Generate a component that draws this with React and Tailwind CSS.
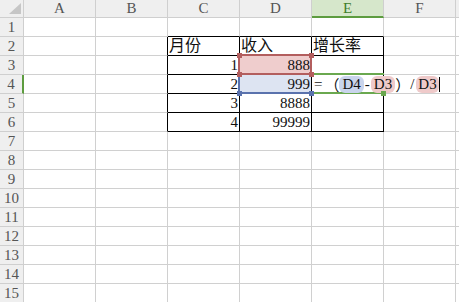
import React from 'react';

const cols = ['A', 'B', 'C', 'D', 'E', 'F', 'G'];
const rows = Array.from({ length: 15 }, (_, i) => i + 1);

const font = { fontFamily: '"Liberation Serif", "Noto Sans CJK SC", serif' };
const cjk = { fontFamily: '"Noto Sans CJK SC", sans-serif' };

// table C2:E6
const data = {
  'C2': { text: '月份', cjk: true },
  'D2': { text: '收入', cjk: true },
  'E2': { text: '增长率', cjk: true },
  'C3': { text: '1', right: true },
  'D3': { text: '888', right: true },
  'C4': { text: '2', right: true },
  'D4': { text: '999', right: true },
  'C5': { text: '3', right: true },
  'D5': { text: '8888', right: true },
  'C6': { text: '4', right: true },
  'D6': { text: '99999', right: true },
};

const Handle = ({ pos, color }) => (
  <div className={`absolute w-[5px] h-[5px] z-20 ${color} ${pos}`} />
);

const Cell = ({ r, c }) => {
  const key = cols[c] + r;
  const d = data[key];
  const rightBlack = r >= 2 && r <= 6 && c >= 1 && c <= 4;
  const bottomBlack = r >= 1 && r <= 6 && c >= 2 && c <= 4;
  let bg = 'bg-white';
  if (key === 'D3') bg = 'bg-[#efcdcd]';
  if (key === 'D4') bg = 'bg-[#dde4f2]';

  return (
    <div
      className={`relative border-r border-b ${rightBlack ? 'border-r-black' : 'border-r-[#d0d0d0]'} ${bottomBlack ? 'border-b-black' : 'border-b-[#d0d0d0]'} ${bg} flex items-center ${d && d.right ? 'justify-end pr-[1px]' : 'justify-start pl-[1px]'} overflow-visible`}
    >
      {d && (
        <span className={`leading-none relative z-10 ${d.cjk ? 'text-[16px]' : 'text-[15px]'} text-[#111]`} style={font}>
          {d.text}
        </span>
      )}
      {key === 'D3' && (
        <>
          <div className="absolute -left-[2px] -top-[2px] -right-[1px] -bottom-[1px] border-2 border-[#b35e5e]" />
          <Handle pos="-left-[3px] -top-[3px]" color="bg-[#b35e5e]" />
          <Handle pos="-right-[3px] -top-[3px]" color="bg-[#b35e5e]" />
          <Handle pos="-left-[3px] -bottom-[3px]" color="bg-[#b35e5e]" />
          <Handle pos="-right-[3px] -bottom-[3px]" color="bg-[#b35e5e]" />
        </>
      )}
      {key === 'D4' && (
        <>
          <div className="absolute -left-[2px] top-0 -right-[1px] -bottom-[1px] border-l-2 border-b-2 border-[#5a72ad]" />
          <Handle pos="-left-[3px] -bottom-[3px]" color="bg-[#5a72ad]" />
          <Handle pos="-right-[3px] -bottom-[3px]" color="bg-[#5a72ad]" />
        </>
      )}
      {key === 'E4' && (
        <>
          <div className="absolute left-0 -top-[2px] -right-[1px] -bottom-[1px] border-t-2 border-b-2 border-[#6aa84f]" />
          <Handle pos="-right-[3px] -bottom-[3px]" color="bg-[#6aa84f]" />
          <div className="absolute left-[2px] top-0 bottom-0 flex items-center whitespace-nowrap z-10 text-[15px] leading-none text-[#111]" style={font}>
            <span>=</span>
            <span className="ml-[2px]" style={cjk}>（</span>
            <span className="bg-[#c9d4ec] rounded-[6px] px-[3px] py-[1px]">D4</span>
            <span className="px-[1px]">-</span>
            <span className="bg-[#efcaca] rounded-[6px] px-[3px] py-[1px]">D3</span>
            <span style={cjk}>）</span>
            <span className="pr-[2px]">/</span>
            <span className="bg-[#efcaca] rounded-[6px] px-[2px] py-[1px]">D3</span>
            <span className="w-[1px] h-[15px] bg-black" />
          </div>
        </>
      )}
    </div>
  );
};

export default function App() {
  return (
    <div className="w-[459px] h-[302px] overflow-hidden bg-white select-none">
      <div className="grid grid-cols-[24px_repeat(6,72px)_60px] grid-rows-[18px_repeat(15,19px)]">
        {/* corner */}
        <div className="relative bg-[#efefef] border-r border-b border-[#cfcfcf]">
          <svg className="absolute right-[2px] bottom-[3px]" width="12" height="11" viewBox="0 0 12 11">
            <polygon points="12,0 12,11 0,11" fill="#c6c6c6" />
          </svg>
        </div>
        {cols.map((c) => (
          <div
            key={c}
            className={`flex items-center justify-center border-r text-[15px] leading-none ${c === 'E' ? 'bg-[#d6e7cb] text-[#3f7d2a] border-b-2 border-b-[#5d9c3f] border-r-[#cfcfcf]' : 'bg-[#efefef] text-[#555] border-b border-[#cfcfcf]'}`}
            style={font}
          >
            {c === 'G' ? '' : c}
          </div>
        ))}
        {rows.map((r) => (
          <React.Fragment key={r}>
            <div
              className={`flex items-center justify-center bg-[#efefef] border-b border-[#cfcfcf] text-[15px] leading-none text-[#555] ${r === 4 ? 'border-r-2 border-r-[#5d9c3f]' : 'border-r border-r-[#cfcfcf]'}`}
              style={font}
            >
              {r}
            </div>
            {cols.map((c, ci) => (
              <Cell key={c} r={r} c={ci} />
            ))}
          </React.Fragment>
        ))}
      </div>
    </div>
  );
}
